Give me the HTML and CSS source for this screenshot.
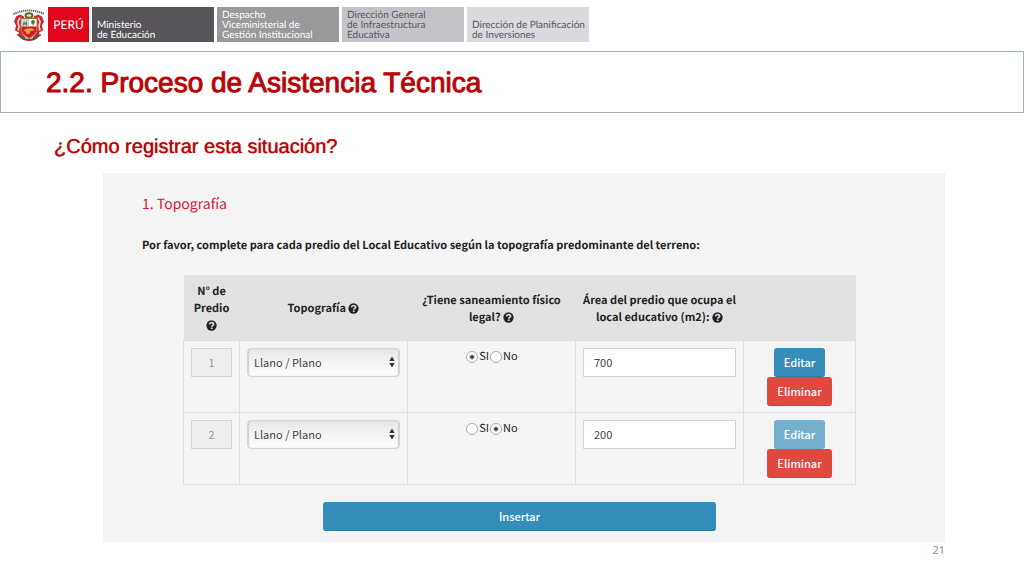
FILE: index.html
```html
<!DOCTYPE html>
<html lang="es">
<head>
  <meta charset="UTF-8">
  <title>2.2. Proceso de Asistencia Técnica</title>
  <link rel="stylesheet" href="styles.css">
</head>
<body>
  <svg class="defs" aria-hidden="true">
    <symbol id="help" viewBox="0 0 12 12">
      <circle cx="6" cy="6" r="5.6" fill="#222"/>
      <path d="M3.800 4.700C4 3.300 4.900 2.700 6 2.700s2.300.7 2.300 1.900C8.300 5.900 6.300 5.800 6.300 7.300" fill="none" stroke="#e2e2e2" stroke-width="1.800"/>
      <rect x="5.300" y="8.200" width="1.900" height="1.600" fill="#e2e2e2"/>
    </symbol>
    <symbol id="arrows" viewBox="0 0 6 12">
      <path d="M3 0.500 5.700 5H.3zM3 11.500 5.700 7H.3z" fill="#333"/>
    </symbol>
  </svg>

  <header class="header">
    <svg class="escudo" viewBox="0 0 32 34" role="img" aria-label="Escudo del Perú">
      <path d="M.5 6.500Q16-.5 31.500 6.500" fill="none" stroke="#6b6060" stroke-width="2" stroke-dasharray="1.300 .7"/>
      <!-- flags -->
      <path d="M11 9 7 7 3 9 1 14l2 4-1 5 4 2-1 3 7 3z" fill="#d22630"/>
      <path d="M21 9l4-2 4 2 2 5-2 4 1 5-4 2 1 3-7 3z" fill="#d22630"/>
      <path d="M7 10 5 14l1 5-1 4M25 10l2 4-1 5 1 4" fill="none" stroke="#f4e5df" stroke-width="1.600"/>
      <path d="M4 27 12 32.500M28 27 20 32.500" stroke="#7a4a29" stroke-width="1.500"/>
      <!-- wreath -->
      <ellipse cx="16" cy="8" rx="3.500" ry="2.300" fill="#e8e6c8" stroke="#4e6b3d" stroke-width="2"/>
      <!-- shield -->
      <path d="M8 11h16v11q0 6-8 9-8-3-8-9z" fill="#fff" stroke="#a8722e" stroke-width="1"/>
      <path d="M8.500 11.500H16V19H8.500z" fill="#b5d6dd"/>
      <path d="M8.500 19h15v3q0 5-7.500 8.500Q8.500 27 8.500 22z" fill="#c91d25"/>
      <path d="M10 18v-3h3l1-2v5h-1v-1h-2v1z" fill="#8e6844"/>
      <path d="M20 14v4" stroke="#714e2c" stroke-width="1"/>
      <circle cx="20" cy="14.500" r="2" fill="#4e7b3d"/>
      <path d="M10.500 23.500q1-3 5-2.500 5-1 6 2l-4 .5-1 3h-3l-.5-2.500z" fill="#e9a23c"/>
      <path d="M7 28q2 4 9 4.500 7-.5 9-4.500" fill="none" stroke="#465b34" stroke-width="2"/>
      <path d="M14 32.500h4" stroke="#c91d25" stroke-width="2"/>
    </svg>
    <div class="box peru">PERÚ</div>
    <div class="box ministerio">Ministerio<br>de Educación</div>
    <div class="box despacho">Despacho<br>Viceministerial de<br>Gestión Institucional</div>
    <div class="box general">Dirección General<br>de Infraestructura<br>Educativa</div>
    <div class="box planificacion">Dirección de Planificación<br>de Inversiones</div>
  </header>

  <div class="title-bar">
    <h1>2.2. Proceso de Asistencia Técnica</h1>
  </div>

  <main>
    <h2>¿Cómo registrar esta situación?</h2>

    <form class="panel">
      <h3>1. Topografía</h3>
      <p>Por favor, complete para cada predio del Local Educativo según la topografía predominante del terreno:</p>

      <div class="predios">
        <table>
          <colgroup>
            <col class="col-num">
            <col class="col-field">
            <col class="col-field">
            <col class="col-field">
            <col>
          </colgroup>
          <thead>
            <tr>
              <th>N° de Predio <svg class="help"><use href="#help"/></svg></th>
              <th>Topografía <svg class="help"><use href="#help"/></svg></th>
              <th>¿Tiene saneamiento físico legal? <svg class="help"><use href="#help"/></svg></th>
              <th>Área del predio que ocupa el local educativo (m2): <svg class="help"><use href="#help"/></svg></th>
              <th></th>
            </tr>
          </thead>
          <tbody>
            <tr>
              <td><input class="num" type="text" value="1" aria-label="N° de Predio" disabled></td>
              <td>
                <div class="select">
                  <select aria-label="Topografía"><option>Llano / Plano</option></select>
                  <svg><use href="#arrows"/></svg>
                </div>
              </td>
              <td>
                <div class="radios">
                  <input type="radio" name="legal1" id="si1" checked><label for="si1">SI</label>
                  <input type="radio" name="legal1" id="no1"><label for="no1">No</label>
                </div>
              </td>
              <td><input class="area" type="text" value="700" aria-label="Área del predio (m2)"></td>
              <td>
                <div class="actions">
                  <button type="button" class="btn">Editar</button>
                  <button type="button" class="btn btn-danger">Eliminar</button>
                </div>
              </td>
            </tr>
            <tr>
              <td><input class="num" type="text" value="2" aria-label="N° de Predio" disabled></td>
              <td>
                <div class="select">
                  <select aria-label="Topografía"><option>Llano / Plano</option></select>
                  <svg><use href="#arrows"/></svg>
                </div>
              </td>
              <td>
                <div class="radios">
                  <input type="radio" name="legal2" id="si2"><label for="si2">SI</label>
                  <input type="radio" name="legal2" id="no2" checked><label for="no2">No</label>
                </div>
              </td>
              <td><input class="area" type="text" value="200" aria-label="Área del predio (m2)"></td>
              <td>
                <div class="actions">
                  <button type="button" class="btn" disabled>Editar</button>
                  <button type="button" class="btn btn-danger">Eliminar</button>
                </div>
              </td>
            </tr>
          </tbody>
        </table>

        <button type="button" class="btn btn-insert">Insertar</button>
      </div>
    </form>
    <div class="page-number">21</div>
  </main>
</body>
</html>
```

FILE: styles.css
```css
* {
  box-sizing: border-box;
}
body {
  margin: 0;
  background: #fff;
  font-family: "Noto Sans CJK SC", "Open Sans", sans-serif;
  font-size: 11px;
  line-height: 17px;
  color: #222;
  text-rendering: geometricPrecision;
}
.defs {
  display: none;
}

/* header */
.header {
  display: flex;
  gap: 3px;
  padding: 7px 13px 9px;
}
.escudo {
  width: 32px;
  height: 35px;
}
.box {
  display: flex;
  flex-direction: column;
  justify-content: flex-end;
  width: 122px;
  height: 35px;
  padding: 0 0 2px 5px;
  font-family: Lato, "Open Sans", sans-serif;
  font-size: 10px;
  line-height: 10px;
  white-space: nowrap;
}
.peru {
  width: 41px;
  padding: 0;
  justify-content: center;
  text-align: center;
  font-size: 12px;
  background: #e1061b;
  color: #fff;
}
.ministerio {
  background: #57555a;
  color: #fff;
}
.despacho {
  background: #99989b;
  color: #fff;
}
.general {
  background: #c3c3c8;
  color: #57575c;
}
.planificacion {
  background: #d9d9de;
  color: #57575c;
}

/* titles */
.title-bar {
  padding: 15px 45px 13px;
  border: 1px solid #a5afbb;
}
h1, h2 {
  margin: 0;
  font-family: "Liberation Sans", Arial, sans-serif;
  font-weight: normal;
  color: #b90507;
}
h1 {
  font-size: 28px;
  line-height: 32px;
  -webkit-text-stroke: 1px #b90507;
}
main {
  padding: 20px 79px 0 103px;
}
h2 {
  margin: 0 0 12px -49px;
  font-size: 20px;
  line-height: 28px;
  text-shadow: 0 0 1px #b90507;
}

/* form */
.panel {
  padding: 21px 39px 11px;
  background: #f4f4f4;
}
.panel h3 {
  margin: 0 0 23px;
  font-size: 14px;
  line-height: 20px;
  font-weight: normal;
  color: #d9142b;
}
.panel p {
  margin: 0 0 21px;
  font-weight: bold;
}
.predios {
  padding: 0 50px 0 41px;
}
table {
  width: 100%;
  margin-bottom: 17px;
  table-layout: fixed;
  border-collapse: collapse;
}
.col-num {
  width: 56px;
}
.col-field {
  width: 25%;
}
th {
  height: 65px;
  padding: 8px 7px 6px;
  background: #e2e2e2;
}
td {
  padding: 7px 7px 6px;
  border: 1px solid #dedede;
  vertical-align: top;
}
.help {
  width: 11px;
  height: 11px;
  vertical-align: -2px;
}
input, select, button {
  font: inherit;
}
.num, .area, select {
  display: block;
  width: 100%;
  height: 29px;
  padding: 0 10px 2px;
  border: 1px solid #d5d5d5;
  background: #fff;
  color: #444;
}
.num {
  padding: 0 0 2px;
  text-align: center;
  background: #eee;
  color: #999;
}
.select {
  position: relative;
}
select {
  appearance: none;
  padding: 0 6px;
  border-radius: 4px;
  background: linear-gradient(#e7e7e7, #fff);
  box-shadow: inset 1px 0 1px #ccc, inset -1px 0 1px #ccc;
}
.select svg {
  position: absolute;
  right: 5px;
  top: 8px;
  width: 6px;
  height: 12px;
  pointer-events: none;
}
.radios {
  display: flex;
  justify-content: center;
  align-items: center;
}
.radios input {
  appearance: none;
  width: 12px;
  height: 12px;
  margin: 0 1px;
  border: 1px solid #aaa;
  border-radius: 50%;
  background: #fff;
}
.radios input:checked {
  background: radial-gradient(circle, #333 1px, #fff 3px);
}
.actions {
  display: flex;
  flex-direction: column;
  align-items: center;
}
.btn {
  height: 29px;
  padding: 0 10px;
  border: 0;
  border-bottom: 1px solid #2d7ea5;
  border-radius: 3px;
  background: #348eb9;
  color: #fff;
  font-weight: 500;
}
.btn:disabled {
  border-color: #70abc7;
  background: #74b0cd;
}
.btn-danger {
  border-color: #cd3f38;
  background: #e1483f;
}
.btn-insert {
  display: block;
  width: calc(100% * 7 / 12);
  margin: 0 auto;
}
.page-number {
  font-family: "Open Sans", sans-serif;
  text-align: right;
  color: #8c8c8c;
}
```
